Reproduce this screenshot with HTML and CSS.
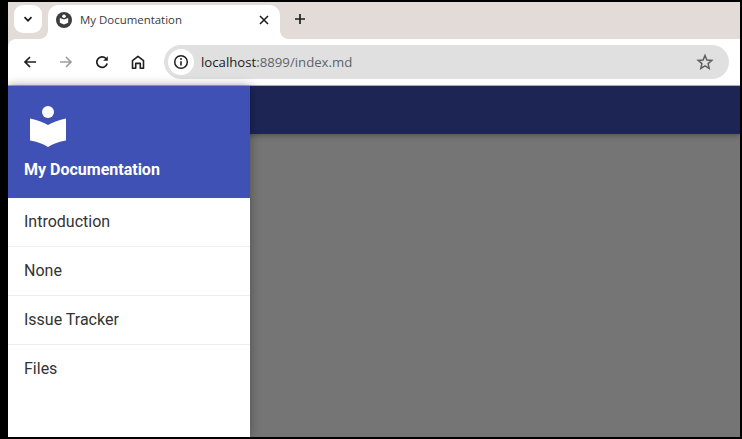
FILE: index.html
```html
<!DOCTYPE html>
<html lang="en">
<head>
<meta charset="utf-8">
<title>My Documentation</title>
<link rel="stylesheet" href="styles.css">
</head>
<body>
<div class="window">
  <div class="tabstrip">
    <button class="tabsearch" aria-label="Tab search">
      <svg width="10" height="10" viewBox="0 0 10 10"><path d="M1.500 3.200 5 6.700 8.500 3.200" fill="none" stroke="#1f1f1f" stroke-width="1.700"/></svg>
    </button>
    <div class="tab">
      <svg class="favicon" width="16" height="16" viewBox="0 0 16 16"><circle cx="8" cy="8" r="8" fill="#3c3c3c"/><circle cx="8" cy="4.300" r="1.800" fill="#fff"/><path d="M3.800 6 8 7.600 12.200 6V10.800L8 12.600 3.800 10.800Z" fill="#fff"/></svg>
      <span class="tabtitle">My Documentation</span>
      <svg class="tabclose" width="10" height="10" viewBox="0 0 10 10"><path d="M1 1 9 9M9 1 1 9" stroke="#1f1f1f" stroke-width="1.600"/></svg>
    </div>
    <svg class="newtab" width="12" height="12" viewBox="0 0 12 12"><path d="M6 1V11M1 6H11" stroke="#1f1f1f" stroke-width="1.700"/></svg>
  </div>
  <div class="toolbar">
    <svg class="tool" width="16" height="16" viewBox="0 0 16 16"><path d="M14 8H3M8 3 3 8 8 13" fill="none" stroke="#1f1f1f" stroke-width="1.700"/></svg>
    <svg class="tool" width="16" height="16" viewBox="0 0 16 16"><path d="M2 8H13M8 3 13 8 8 13" fill="none" stroke="#9e9e9e" stroke-width="1.700"/></svg>
    <svg class="tool" width="16" height="16" viewBox="0 0 16 16"><path d="M13.200 9.500A5.300 5.300 0 1 1 12 4.500" fill="none" stroke="#1f1f1f" stroke-width="1.700"/><path d="M13.800 2.200V6.800H9.200Z" fill="#1f1f1f"/></svg>
    <svg class="tool" width="16" height="16" viewBox="0 0 16 16"><path d="M2.500 14.300V6.600L8 2.300 13.500 6.600V14.300H10.300V9.400H5.700V14.300Z" fill="none" stroke="#1f1f1f" stroke-width="1.600" stroke-linejoin="round"/></svg>
    <div class="omnibox">
      <span class="siteinfo">
        <svg width="16" height="16" viewBox="0 0 16 16"><circle cx="8" cy="8" r="6.300" fill="none" stroke="#1f1f1f" stroke-width="1.500"/><path d="M8 7.200V11.500" stroke="#1f1f1f" stroke-width="1.600"/><circle cx="8" cy="5" r="1" fill="#1f1f1f"/></svg>
      </span>
      <span class="url"><span class="host">localhost</span>:8899/index.md</span>
      <svg class="star" width="18" height="18" viewBox="0 0 18 18"><path d="M9 2.500 10.900 7 15.800 7.400 12.100 10.600 13.200 15.400 9 12.900 4.800 15.400 5.900 10.600 2.200 7.400 7.100 7Z" fill="none" stroke="#5f5f5f" stroke-width="1.500"/></svg>
    </div>
  </div>
  <div class="page">
    <div class="backdrop">
      <div class="appbar"></div>
    </div>
    <aside class="drawer">
      <header class="drawerhead">
        <svg class="logo" width="36" height="41" viewBox="0 0 36 41"><circle cx="18" cy="6" r="6" fill="#fff"/><path d="M0 12.500C7 14 13 16 18 19 23 16 29 14 36 12.500V34.500C29 35.500 23 37.800 18 41 13 37.800 7 35.500 0 34.500Z" fill="#fff"/></svg>
        <div class="drawertitle">My Documentation</div>
      </header>
      <nav class="menu">
        <a class="item">Introduction</a>
        <a class="item">None</a>
        <a class="item">Issue Tracker</a>
        <a class="item">Files</a>
      </nav>
    </aside>
  </div>
</div>
</body>
</html>
```
FILE: styles.css
```css
* { box-sizing: border-box; }
html, body { margin: 0; height: 100%; overflow: hidden; }
body { background: #000; padding: 2px 2px 2px 8px; }
.window { display: flex; flex-direction: column; height: 435px; background: #e3dbd8; }

.tabstrip { height: 37px; display: flex; align-items: flex-end; padding-left: 6px; flex: none; }
.tabsearch { width: 28px; height: 28px; margin: 0 6px 6px 0; border: 0; border-radius: 9px; background: #fff; display: flex; align-items: center; justify-content: center; padding: 0; }
.tab { width: 232px; height: 34px; background: #fff; border-radius: 10px 10px 0 0; display: flex; align-items: center; padding: 0 10px 4px 8px; position: relative; flex: none; margin-right: 14px; }
.tab::before, .tab::after { content: ""; position: absolute; bottom: 0; width: 8px; height: 8px; }
.tab::before { left: -8px; background: radial-gradient(circle at 0 0, transparent 7.500px, #fff 8px); }
.tab::after { right: -8px; background: radial-gradient(circle at 100% 0, transparent 7.500px, #fff 8px); }
.favicon { flex: none; margin-right: 8px; }
.tabtitle { flex: 1; font: 11.450px/16px "Open Sans", sans-serif; color: #3b3b3b; }
.tabclose { flex: none; margin-right: 1px; }
.newtab { margin-bottom: 14px; flex: none; }

.toolbar { height: 47px; background: #fff; border-top-left-radius: 8px; display: flex; align-items: center; padding: 0 11px 1px 14px; border-bottom: 1px solid #b5b6bf; flex: none; }
.tool { flex: none; margin-right: 20px; }
.omnibox { flex: 1; height: 34px; margin-left: -2px; border-radius: 17px; background: #e0e0e0; display: flex; align-items: center; padding: 0 15px 0 4px; }
.siteinfo { width: 26px; height: 26px; border-radius: 50%; background: #fff; display: flex; align-items: center; justify-content: center; flex: none; }
.url { flex: 1; margin-left: 7px; font: 13.200px/18px "Open Sans", sans-serif; color: #5f6368; }
.host { color: #202124; }
.star { flex: none; }

.page { flex: 1; display: flex; position: relative; min-height: 0; background: #757575; }
.backdrop { position: absolute; inset: 0; }
.appbar { height: 48px; background: #1c2554; box-shadow: 0 2px 5px rgba(0,0,0,.28); }
.drawer { position: relative; width: 242px; background: #fff; box-shadow: 0 0 10px rgba(0,0,0,.35); display: flex; flex-direction: column; }
.drawerhead { height: 112px; background: #3f51b5; padding: 20px 16px 0 16px; display: flex; flex-direction: column; color: #fff; flex: none; }
.logo { margin-left: 6px; flex: none; }
.drawertitle { margin-top: 11px; font: 700 16px/24px Roboto, sans-serif; }
.menu { display: flex; flex-direction: column; }
.item { height: 49px; padding: 0 16px; display: flex; align-items: center; font: 16px/24px Roboto, sans-serif; color: #333; border-bottom: 1px solid #eeeeee; }
.item:last-child { border-bottom-color: transparent; }
```
